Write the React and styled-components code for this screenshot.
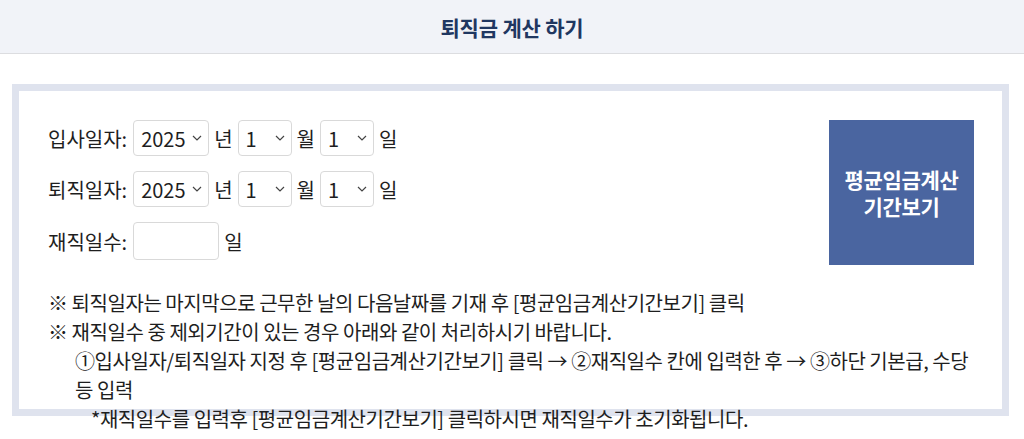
import styled, { createGlobalStyle } from 'styled-components';

const GlobalStyle = createGlobalStyle`
  html, body {
    margin: 0;
    min-height: 100%;
  }
  body {
    background: #fff;
    color: #1e1e1e;
    font-family: "Noto Sans CJK KR", "Noto Sans", sans-serif;
  }
  * { box-sizing: border-box; }
`;

const years = [2025, 2024, 2023, 2022, 2021, 2020];
const nums = (n) => Array.from({ length: n }, (_, i) => i + 1);

const Chevron = () => (
  <svg width="10" height="6" viewBox="0 0 10 6" fill="none">
    <path d="M1 1l4 4 4-4" stroke="#444" strokeWidth="1.2" />
  </svg>
);

const DateSelect = ({ width, options }) => (
  <SelectWrap>
    <Select $width={width} defaultValue={options[0]}>
      {options.map((o) => (
        <option key={o} value={o}>{o}</option>
      ))}
    </Select>
    <Arrow><Chevron /></Arrow>
  </SelectWrap>
);

const DateRow = ({ label }) => (
  <Row>
    <Label>{label}:</Label>
    <DateSelect width={76} options={years} />
    <Unit>년</Unit>
    <DateSelect width={54} options={nums(12)} />
    <Unit>월</Unit>
    <DateSelect width={54} options={nums(31)} />
    <Unit>일</Unit>
  </Row>
);

const App = () => {
  return (
    <Page>
      <GlobalStyle />
      <Header>
        <Title>퇴직금 계산 하기</Title>
      </Header>
      <Main>
        <Panel>
          <Top>
            <Form>
              <DateRow label="입사일자" />
              <DateRow label="퇴직일자" />
              <Row>
                <Label>재직일수:</Label>
                <DaysInput type="text" />
                <Unit>일</Unit>
              </Row>
            </Form>
            <CalcButton>
              평균임금계산
              <br />
              기간보기
            </CalcButton>
          </Top>
          <Notes>
            <Note>※ 퇴직일자는 마지막으로 근무한 날의 다음날짜를 기재 후 [평균임금계산기간보기] 클릭</Note>
            <Note>※ 재직일수 중 제외기간이 있는 경우 아래와 같이 처리하시기 바랍니다.</Note>
            <Note $indent={27}>
              ①입사일자/퇴직일자 지정 후 [평균임금계산기간보기] 클릭 → ②재직일수 칸에 입력한 후 → ③하단 기본급, 수당 등 입력
            </Note>
            <Note $indent={43}>*재직일수를 입력후 [평균임금계산기간보기] 클릭하시면 재직일수가 초기화됩니다.</Note>
          </Notes>
        </Panel>
      </Main>
    </Page>
  );
};

const Page = styled.div`
  min-height: 439px;
`;
const Header = styled.header`
  height: 54px;
  background: #f1f3f8;
  border-bottom: 1px solid #dcdde0;
  display: flex;
  align-items: center;
  justify-content: center;
`;
const Title = styled.h1`
  margin: 0;
  font-size: 21px;
  font-weight: 700;
  color: #1f3761;
  letter-spacing: -0.2px;
`;
const Main = styled.main`
  padding: 30px 15px 23px 12px;
`;
const Panel = styled.section`
  height: 332px;
  border: 7px solid #dfe3ee;
  padding: 29px 28px 0 29px;
`;
const Top = styled.div`
  display: flex;
  justify-content: space-between;
  align-items: flex-start;
`;
const Form = styled.div`
  display: flex;
  flex-direction: column;
  gap: 15px;
`;
const Row = styled.div`
  display: flex;
  align-items: center;
  font-size: 20px;
`;
const Label = styled.span`
  margin-right: 6px;
`;
const Unit = styled.span`
  margin: 0 5px;
`;
const SelectWrap = styled.span`
  position: relative;
  display: inline-flex;
`;
const Select = styled.select`
  appearance: none;
  width: ${(p) => p.$width}px;
  height: 36px;
  padding: 0 0 0 7px;
  border: 1px solid #d9d9d9;
  border-radius: 4px;
  background: #fff;
  color: #1e1e1e;
  font-family: inherit;
  font-size: 20px;
  outline: none;
`;
const Arrow = styled.span`
  position: absolute;
  right: 7px;
  top: 15px;
  display: flex;
  pointer-events: none;
`;
const DaysInput = styled.input`
  width: 86px;
  height: 38px;
  border: 1px solid #d9d9d9;
  border-radius: 4px;
  font-family: inherit;
  font-size: 20px;
  padding: 0 6px;
  outline: none;
`;
const CalcButton = styled.button`
  width: 145px;
  height: 145px;
  border: none;
  background: #4a65a0;
  color: #fff;
  font-family: inherit;
  font-size: 21px;
  font-weight: 700;
  line-height: 27px;
  letter-spacing: -0.3px;
  cursor: pointer;
`;
const Notes = styled.div`
  margin-top: 23px;
`;
const Note = styled.p`
  margin: 0;
  padding-left: ${(p) => p.$indent ?? 0}px;
  font-size: 20px;
  line-height: 29px;
  letter-spacing: -0.45px;
  word-break: keep-all;
`;

export default App;
